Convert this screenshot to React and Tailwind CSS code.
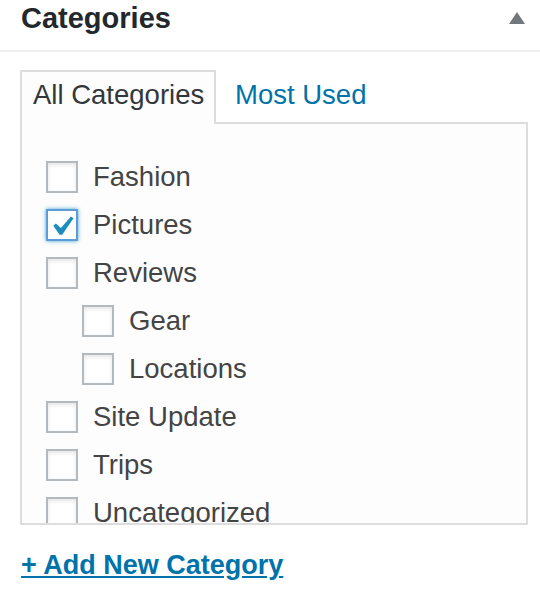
import React from "react";

const items = [
  { label: "Fashion", level: 0 },
  { label: "Pictures", level: 0, checked: true },
  { label: "Reviews", level: 0 },
  { label: "Gear", level: 1 },
  { label: "Locations", level: 1 },
  { label: "Site Update", level: 0 },
  { label: "Trips", level: 0 },
  { label: "Uncategorized", level: 0 },
];

function Box({ checked }) {
  if (checked) {
    return (
      <div className="relative w-[32px] h-[32px] shrink-0 bg-white border-2 border-[#5b9dd9] shadow-[0_0_4px_rgba(30,140,190,0.8)]">
        <svg
          className="absolute left-[-6px] top-[-4px] w-[39px] h-[39px]"
          viewBox="0 0 20 20"
        >
          <path
            fill="#1e8cbe"
            d="M14.83 4.89l1.34.94-5.81 8.38H9.02L5.78 9.67l1.34-1.25 2.57 2.4z"
          />
        </svg>
      </div>
    );
  }
  return (
    <div className="w-[32px] h-[32px] shrink-0 bg-white border-2 border-[#b4b9be] shadow-[inset_0_2px_4px_rgba(0,0,0,0.1)]" />
  );
}

export default function App() {
  return (
    <div
      className="w-[540px] h-[604px] bg-white overflow-hidden"
      style={{ fontFamily: '"Liberation Sans", Arial, sans-serif' }}
    >
      <div className="h-[52px] border-b-2 border-[#eeeeee] pl-[21px] pr-[15px] pt-[4px] flex justify-between">
        <h2 className="text-[29px] leading-[29px] font-bold text-[#23282d]">
          Categories
        </h2>
        <svg className="w-[16px] h-[12px] mt-[8px]" viewBox="0 0 16 12">
          <path d="M8 0L16 12H0z" fill="#72777c" />
        </svg>
      </div>

      <div className="pl-[20px] pr-[12px] pt-[18px]">
        <div className="flex items-start">
          <div className="relative z-10 w-[196px] h-[54px] -mb-[2px] border-2 border-b-0 border-[#dddddd] bg-[#fdfdfd] pl-[11px] pt-[3px]">
            <span className="block text-[27.5px] leading-[40px] text-[#32373c] whitespace-nowrap">
              All Categories
            </span>
          </div>
          <div className="ml-[19px] pt-[5px]">
            <span className="block text-[27.5px] leading-[40px] text-[#0073aa] whitespace-nowrap">
              Most Used
            </span>
          </div>
        </div>

        <div className="w-[508px] h-[403px] border-2 border-[#dddddd] bg-[#fdfdfd] overflow-hidden pl-[24px] pt-[29px]">
          {items.map((it) => (
            <div
              key={it.label}
              className={
                "h-[48px] flex items-center " + (it.level ? "pl-[36px]" : "")
              }
            >
              <Box checked={it.checked} />
              <span className="ml-[15px] text-[27.5px] leading-[48px] text-[#444444] whitespace-nowrap">
                {it.label}
              </span>
            </div>
          ))}
        </div>

        <div className="mt-[20px] pl-[1px]">
          <a className="text-[27px] leading-[40px] font-bold text-[#0073aa] underline whitespace-nowrap">
            + Add New Category
          </a>
        </div>
      </div>
    </div>
  );
}
